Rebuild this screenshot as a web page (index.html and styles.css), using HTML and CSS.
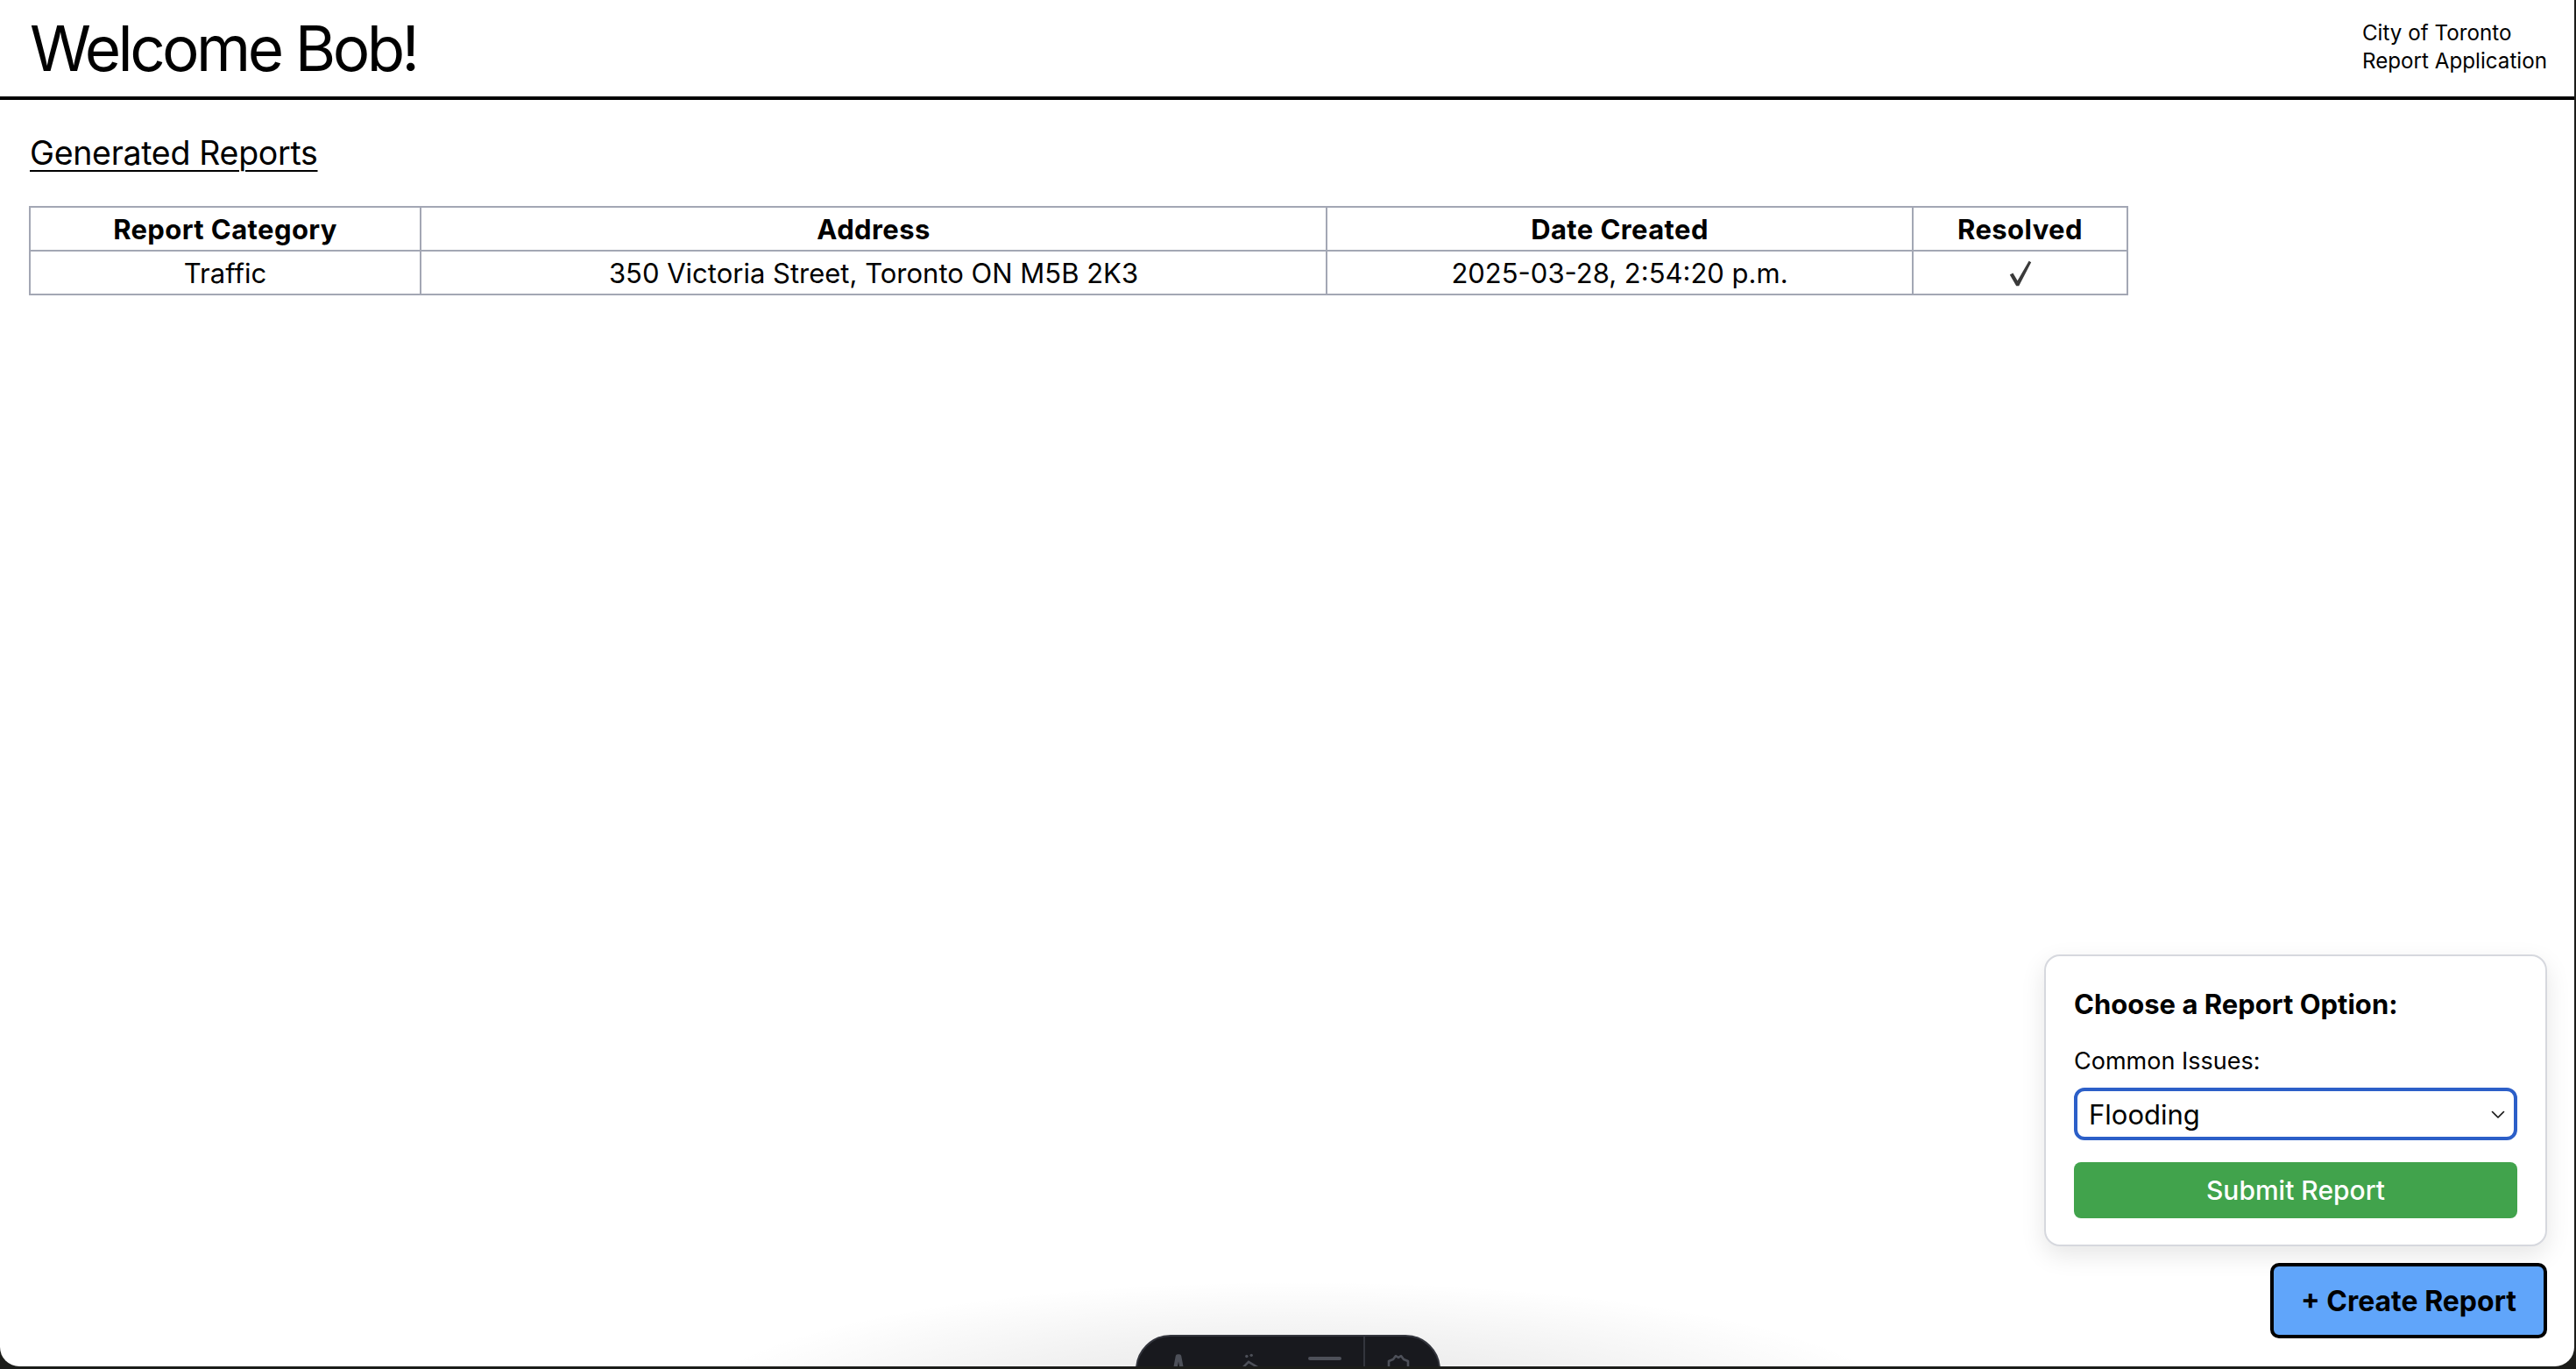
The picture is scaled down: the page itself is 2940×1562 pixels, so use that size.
FILE: index.html
```html
<!DOCTYPE html>
<html lang="en">
<head>
<meta charset="utf-8">
<title>City of Toronto Report Application</title>
<link rel="stylesheet" href="styles.css">
</head>
<body>
<div class="window">
  <header class="topbar">
    <h1 class="welcome">Welcome Bob!</h1>
    <div class="brand">City of Toronto<br>Report Application</div>
  </header>

  <main class="content">
    <h3 class="section-title">Generated Reports</h3>
    <table class="reports">
      <colgroup>
        <col class="col-cat">
        <col class="col-addr">
        <col class="col-date">
        <col class="col-res">
      </colgroup>
      <thead>
        <tr>
          <th>Report Category</th>
          <th>Address</th>
          <th>Date Created</th>
          <th>Resolved</th>
        </tr>
      </thead>
      <tbody>
        <tr>
          <td>Traffic</td>
          <td>350 Victoria Street, Toronto ON M5B 2K3</td>
          <td>2025-03-28, 2:54:20 p.m.</td>
          <td class="check"><svg class="check-icon" viewBox="0 0 26 30" width="26" height="30" role="img" aria-label="Resolved"><path d="M0.8 16.6 L4.4 14.4 L9.6 23.2 L22.6 0.8 L25.2 2.2 L11.2 29.2 L8.2 29.2 Z" fill="#3a3a3a"/></svg></td>
        </tr>
      </tbody>
    </table>
  </main>

  <div class="fab-area">
    <div class="report-card">
      <h4 class="card-title">Choose a Report Option:</h4>
      <label class="card-label" for="issue">Common Issues:</label>
      <div class="select-wrap">
        <select id="issue" class="issue-select">
          <option>Flooding</option>
          <option>Pothole</option>
          <option>Graffiti</option>
        </select>
        <svg class="chevron" viewBox="0 0 16 10" width="16" height="10" aria-hidden="true"><path d="M1.5 1.5 L8 8 L14.5 1.5" fill="none" stroke="#111" stroke-width="1.6" stroke-linecap="round" stroke-linejoin="round"/></svg>
      </div>
      <button class="submit-btn" type="button">Submit Report</button>
    </div>
    <button class="create-btn" type="button">+ Create Report</button>
  </div>

  <div class="toolbar-glow"></div>
  <div class="dev-toolbar">
    <div class="tb-group">
      <svg class="tb-icon" viewBox="0 0 24 24" width="26" height="26"><path d="M8 20 L11 4 L13 4 L16 20" fill="none" stroke="#4d5059" stroke-width="4" stroke-linejoin="round"/></svg>
      <svg class="tb-icon" viewBox="0 0 28 24" width="30" height="26"><path d="M4 20 L14 10 L24 16" fill="none" stroke="#4d5059" stroke-width="2.4"/><circle cx="12" cy="4" r="1.6" fill="#4d5059"/><circle cx="17" cy="3" r="1.6" fill="#4d5059"/></svg>
      <svg class="tb-icon" viewBox="0 0 40 24" width="40" height="24"><rect x="1" y="5" width="38" height="4" rx="2" fill="#4d5059"/><rect x="8" y="16" width="24" height="4" rx="2" fill="#4d5059"/></svg>
    </div>
    <div class="tb-sep"></div>
    <div class="tb-group">
      <svg class="tb-icon" viewBox="0 0 32 32" width="32" height="32"><path d="M10 8 L13 4 L16 6 L19 4 L22 8 L27 10 L27 30 L5 30 L5 10 Z" fill="none" stroke="#4d5059" stroke-width="2.6" stroke-linejoin="round"/></svg>
    </div>
  </div>
</div>
</body>
</html>
```

FILE: styles.css
```css
html, body {
  margin: 0;
  padding: 0;
}

body {
  background: #1c1d1a;
  width: 2940px;
  height: 1562px;
  overflow: hidden;
  font-family: Inter, "Liberation Sans", sans-serif;
  color: #000;
}

.window {
  position: relative;
  width: 2938px;
  height: 1559px;
  background: #fff;
  border-radius: 0 0 22px 22px;
  overflow: hidden;
}

.topbar {
  display: flex;
  justify-content: space-between;
  align-items: flex-start;
  height: 110px;
  padding: 0 31px 0 34px;
  border-bottom: 4px solid #000;
}

.welcome {
  margin: 19px 0 0;
  font-size: 71px;
  line-height: 72px;
  font-weight: 400;
  letter-spacing: -3.6px;
}

.brand {
  margin-top: 22px;
  font-size: 24.2px;
  line-height: 32px;
}

.content {
  padding: 0 33px;
}

.section-title {
  margin: 38px 0 38px 1px;
  font-size: 37.5px;
  font-weight: 400;
  line-height: normal;
  text-decoration: underline;
  text-decoration-thickness: 2px;
  text-underline-offset: 6px;
  letter-spacing: -0.3px;
}

.reports {
  border-collapse: collapse;
  table-layout: fixed;
  width: 2394px;
  font-size: 31px;
}

.col-cat { width: 446px; }
.col-addr { width: 1034px; }
.col-date { width: 669px; }
.col-res { width: 245px; }

.reports th,
.reports td {
  border: 2px solid #a3a7b4;
  height: 48px;
  padding: 0;
  text-align: center;
  vertical-align: middle;
}

.reports th {
  font-weight: 700;
  letter-spacing: 0.4px;
}

.check {
  line-height: 0;
}

.check-icon {
  display: inline-block;
  vertical-align: middle;
  margin-top: 2px;
}

.fab-area {
  position: absolute;
  right: 31px;
  bottom: 32px;
  display: flex;
  flex-direction: column;
  align-items: flex-end;
  gap: 19px;
}

.report-card {
  width: 574px;
  box-sizing: border-box;
  padding: 36px 32px 30px;
  border: 2px solid #d6d8de;
  border-radius: 18px;
  background: #fff;
  box-shadow: 0 10px 28px rgba(0, 0, 0, 0.10);
  display: flex;
  flex-direction: column;
}

.card-title {
  margin: 0 0 30px;
  font-size: 31px;
  font-weight: 700;
  line-height: normal;
}

.card-label {
  font-size: 27px;
  line-height: normal;
  margin-bottom: 14px;
}

.select-wrap {
  position: relative;
}

.issue-select {
  display: block;
  width: 506px;
  height: 60px;
  box-sizing: border-box;
  border: 4px solid #2c5fc8;
  border-radius: 12px;
  background: #fff;
  padding: 0 40px 0 13px;
  font-family: Inter, "Liberation Sans", sans-serif;
  font-size: 31px;
  color: #000;
  appearance: none;
  -webkit-appearance: none;
  outline: none;
}

.chevron {
  position: absolute;
  right: 14px;
  top: 26px;
}

.submit-btn {
  margin-top: 25px;
  width: 506px;
  height: 64px;
  border: none;
  border-radius: 8px;
  background: #41a34c;
  color: #fff;
  font-family: Inter, "Liberation Sans", sans-serif;
  font-size: 30px;
  font-weight: 500;
}

.create-btn {
  height: 86px;
  padding: 0 31px;
  border: 4px solid #000;
  border-radius: 10px;
  background: #60a5fa;
  color: #000;
  font-family: Inter, "Liberation Sans", sans-serif;
  font-size: 32px;
  font-weight: 700;
}

.toolbar-glow {
  position: absolute;
  left: 780px;
  top: 1460px;
  width: 1400px;
  height: 240px;
  background: radial-gradient(ellipse at 50% 60%, rgba(0, 0, 0, 0.11) 0%, rgba(0, 0, 0, 0.05) 40%, rgba(0, 0, 0, 0) 70%);
}

.dev-toolbar {
  position: absolute;
  left: 1296px;
  top: 1523px;
  width: 348px;
  height: 80px;
  box-sizing: border-box;
  background: #18191e;
  border: 2px solid #33353d;
  border-radius: 40px;
  display: flex;
  align-items: flex-start;
}

.tb-group {
  display: flex;
  align-items: flex-start;
  padding-top: 18px;
}

.tb-group:first-child {
  width: 258px;
  padding-left: 34px;
  gap: 52px;
  box-sizing: border-box;
}

.tb-group:last-child {
  padding-left: 22px;
}

.tb-sep {
  width: 2px;
  height: 80px;
  background: #33353d;
}
```
